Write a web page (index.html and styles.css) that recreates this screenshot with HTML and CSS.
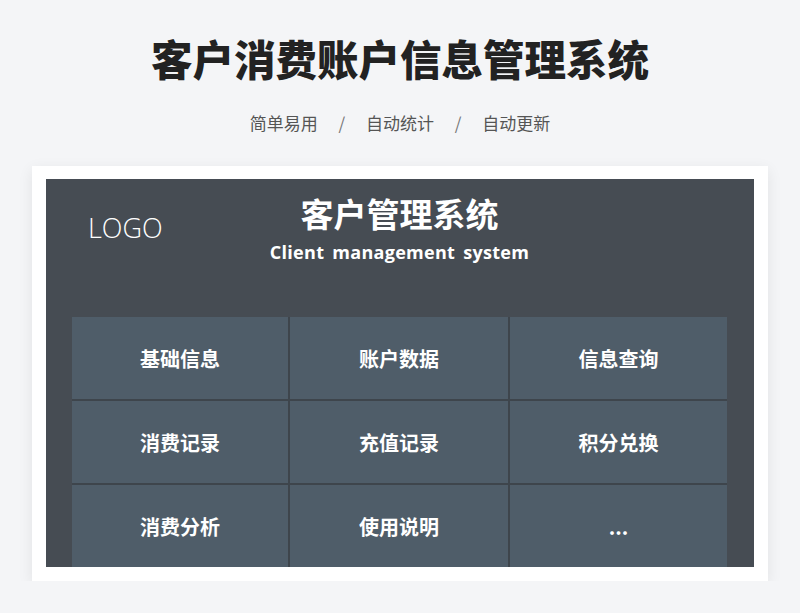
FILE: index.html
```html
<!DOCTYPE html>
<html lang="zh-CN">
<head>
    <meta charset="UTF-8">
    <meta name="viewport" content="width=device-width, initial-scale=1.0">
    <title>客户消费账户信息管理系统</title>
    <link rel="stylesheet" href="styles.css">
</head>
<body>
    <header class="page-head">
        <h1>客户消费账户信息管理系统</h1>
        <p class="tags">
            <span>简单易用</span>
            <span class="sep">/</span>
            <span>自动统计</span>
            <span class="sep">/</span>
            <span>自动更新</span>
        </p>
    </header>

    <div class="card">
        <div class="panel">
            <div class="panel-head">
                <div class="logo">LOGO</div>
                <div class="panel-title">
                    <h2>客户管理系统</h2>
                    <p>Client management system</p>
                </div>
                <div></div>
            </div>

            <div class="menu">
                <div class="menu-item">基础信息</div>
                <div class="menu-item">账户数据</div>
                <div class="menu-item">信息查询</div>
                <div class="menu-item">消费记录</div>
                <div class="menu-item">充值记录</div>
                <div class="menu-item">积分兑换</div>
                <div class="menu-item">消费分析</div>
                <div class="menu-item">使用说明</div>
                <div class="menu-item">...</div>
            </div>
        </div>
    </div>
</body>
</html>
```

FILE: styles.css
```css
body {
    margin: 0;
    background-color: #f4f5f7;
    font-family: "Noto Sans CJK SC", "Noto Sans", sans-serif;
}
.page-head {
    text-align: center;
    padding-top: 30px;
}
h1 {
    margin: 0;
    font-size: 41.5px;
    line-height: 56px;
    font-weight: 900;
    color: #222;
}
.tags {
    margin: 25px 0 0;
    font-size: 17px;
    line-height: 24px;
    color: #555;
}
.tags .sep {
    display: inline-block;
    margin: 0 17px;
    color: #777;
}
.card {
    margin: 31px 32px 0;
    padding: 13px 14px 14px;
    background-color: white;
    box-shadow: 0 4px 14px rgba(0,0,0,0.08);
}
.panel {
    background-color: #464c53;
    height: 388px;
    overflow: hidden;
    padding: 0 27px 0 26px;
}
.panel-head {
    display: grid;
    grid-template-columns: 1fr auto 1fr;
    height: 138px;
}
.logo {
    font-family: "Open Sans", sans-serif;
    font-weight: 300;
    font-size: 27px;
    color: white;
    margin-left: 16px;
    padding-top: 30px;
}
.panel-title {
    text-align: center;
    color: white;
    padding-top: 12px;
}
.panel-title h2 {
    margin: 0;
    font-size: 33px;
    line-height: 44px;
    font-weight: 700;
}
.panel-title p {
    margin: 5px 0 0;
    font-family: "Open Sans", sans-serif;
    font-weight: 700;
    font-size: 18px;
    word-spacing: 3px;
    letter-spacing: 0.3px;
}
.menu {
    display: grid;
    grid-template-columns: 216px 218px 217px;
    grid-auto-rows: 82px;
    gap: 2px;
    background-color: #3e454c;
}
.menu-item {
    background-color: #4f5d69;
    color: white;
    font-size: 20px;
    font-weight: 700;
    display: flex;
    align-items: center;
    justify-content: center;
}
```
